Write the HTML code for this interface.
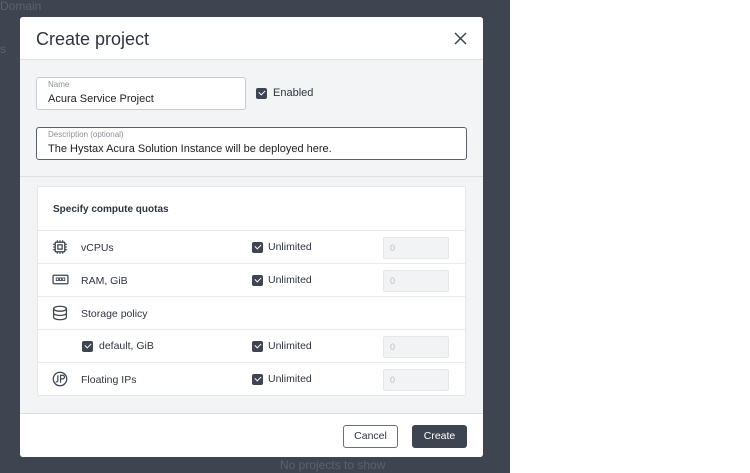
<!DOCTYPE html>
<html><head><style>
*{box-sizing:border-box;margin:0;padding:0}
body{width:750px;height:473px;overflow:hidden;background:#fff;font-family:"Liberation Sans",sans-serif;position:relative;color:#2f3540}
.ov{position:absolute;left:0;top:0;width:510px;height:473px;background:#3e4551}
.bgt{position:absolute;color:#5a6270;font-size:12px}
.modal{position:absolute;left:20px;top:17px;width:463px;height:440px;background:#f3f4f5;border-radius:3px;overflow:hidden}
.hd{height:43px;background:#fff;border-bottom:1px solid #dfe1e4;position:relative}
.hd h1{position:absolute;left:16px;top:12px;font-size:18px;font-weight:normal;color:#2f3540}
.x{position:absolute;right:16px;top:15px}
.inp{position:absolute;background:#fff;border:1px solid #c8ccd1;border-radius:3px}
.inp .l{position:absolute;left:11px;top:2px;font-size:8px;color:#8a9099}
.inp .v{position:absolute;left:11px;top:15px;font-size:11px;color:#222}
.fx{display:flex;align-items:center}
.cb{display:inline-block;width:11px;height:11px;background:#3e4551;border-radius:2px;position:relative;flex:none}
.cb:after{content:"";position:absolute;left:3.5px;top:1.5px;width:3px;height:5px;border:solid #fff;border-width:0 1.3px 1.3px 0;transform:rotate(45deg)}
.sep{position:absolute;left:0;top:159px;width:463px;height:1px;background:#dcdee1}
.panel{position:absolute;left:17px;top:169px;width:429px;height:210px;background:#fff;border:1px solid #e6e7e9;border-radius:2px}
.ph{height:44px;border-bottom:1px solid #e6e7e9;font-size:10px;font-weight:bold;padding:17px 0 0 15px;color:#2f3540}
.row{height:33px;border-bottom:1px solid #e9eaec;position:relative;font-size:10.5px}
.row:last-child{border-bottom:none}
.row .t{position:absolute;left:43px;top:11px}
.row .ic{position:absolute;left:14px;top:8px}
.row .u{position:absolute;left:214px;top:10px}
.row .u span+span{margin-left:5px}
.row .n{position:absolute;left:345px;top:6px;width:66px;height:22px;background:#f2f3f4;border:1px solid #e6e7e9;border-radius:2px;font-size:9px;color:#bbb;padding:5px 6px}
.ft{position:absolute;left:0;top:396px;width:463px;height:44px;background:#fff;border-top:1px solid #dcdee1}
.btn{position:absolute;top:11px;height:23px;border-radius:3px;font-size:10.5px;text-align:center;line-height:21px}
</style></head><body>
<div class="ov"></div>
<div class="bgt" style="left:0;top:-1px">Domain</div>
<div class="bgt" style="left:0;top:42px">s</div>
<div class="bgt" style="left:280px;top:458px;font-size:12px">No projects to show</div>
<div class="modal">
 <div class="hd"><h1>Create project</h1>
 <svg class="x" width="13" height="13" viewBox="0 0 13 13"><path d="M1 1L12 12M12 1L1 12" stroke="#3e4551" stroke-width="1.5"/></svg></div>
 <div class="inp" style="left:16px;top:60px;width:210px;height:33px"><div class="l">Name</div><div class="v">Acura Service Project</div></div>
 <div class="fx" style="position:absolute;left:236px;top:70px;font-size:11px"><span class="cb"></span><span style="margin-left:6px">Enabled</span></div>
 <div class="inp" style="left:16px;top:110px;width:431px;height:33px;border-color:#5a606a"><div class="l">Description (optional)</div><div class="v">The Hystax Acura Solution Instance will be deployed here.</div></div>
 <div class="sep"></div>
 <div class="panel">
  <div class="ph">Specify compute quotas</div>
  <div class="row"><svg class="ic" width="16" height="16" viewBox="0 0 15 15"><rect x="3" y="3" width="9" height="9" rx="1" fill="none" stroke="#3e4551" stroke-width="1.3"/><rect x="5.5" y="5.5" width="4" height="4" fill="none" stroke="#3e4551" stroke-width="1.2"/><path d="M5 1v2M7.5 1v2M10 1v2M5 12v2M7.5 12v2M10 12v2M1 5h2M1 7.5h2M1 10h2M12 5h2M12 7.5h2M12 10h2" stroke="#3e4551" stroke-width="1"/></svg><span class="t">vCPUs</span><div class="u fx"><span class="cb"></span><span>Unlimited</span></div><div class="n">0</div></div>
  <div class="row"><svg class="ic" width="17" height="15" viewBox="0 0 16 14"><rect x="1" y="3" width="14" height="8" rx="1" fill="none" stroke="#3e4551" stroke-width="1.2"/><rect x="4" y="5.5" width="2" height="2.5" fill="none" stroke="#3e4551" stroke-width=".8"/><rect x="7" y="5.5" width="2" height="2.5" fill="none" stroke="#3e4551" stroke-width=".8"/><rect x="10" y="5.5" width="2" height="2.5" fill="none" stroke="#3e4551" stroke-width=".8"/></svg><span class="t">RAM, GiB</span><div class="u fx"><span class="cb"></span><span>Unlimited</span></div><div class="n">0</div></div>
  <div class="row"><svg class="ic" width="16" height="16" viewBox="0 0 15 15"><ellipse cx="7.5" cy="3.5" rx="6" ry="2.3" fill="none" stroke="#3e4551" stroke-width="1.2"/><path d="M1.5 3.5v8c0 1.3 2.7 2.3 6 2.3s6-1 6-2.3v-8M1.5 7.5c0 1.3 2.7 2.3 6 2.3s6-1 6-2.3" fill="none" stroke="#3e4551" stroke-width="1.2"/></svg><span class="t">Storage policy</span></div>
  <div class="row"><div class="fx" style="position:absolute;left:44px;top:10px"><span class="cb"></span><span style="margin-left:6px">default, GiB</span></div><div class="u fx"><span class="cb"></span><span>Unlimited</span></div><div class="n">0</div></div>
  <div class="row"><svg class="ic" width="16" height="16" viewBox="0 0 15 15"><circle cx="7.5" cy="7.5" r="6.3" fill="none" stroke="#3e4551" stroke-width="1.2"/><path d="M5.5 4v5c0 1.3-1.5 1.5-2 1M8 11V4h2a1.7 1.7 0 010 3.4H8" fill="none" stroke="#3e4551" stroke-width="1.1"/></svg><span class="t">Floating IPs</span><div class="u fx"><span class="cb"></span><span>Unlimited</span></div><div class="n">0</div></div>
 </div>
 <div class="ft">
  <div class="btn" style="left:323px;width:55px;border:1px solid #6a707a;background:#fff;color:#2f3540">Cancel</div>
  <div class="btn" style="left:392px;width:55px;background:#3e4551;color:#fff;line-height:23px">Create</div>
 </div>
</div>
</body></html>
